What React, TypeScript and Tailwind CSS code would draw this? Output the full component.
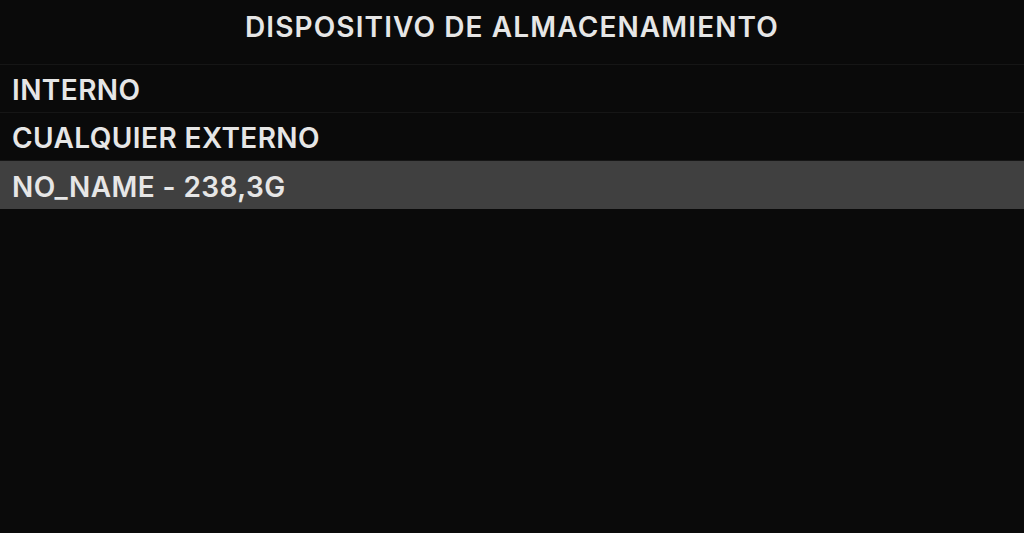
const rows = [
  { label: "INTERNO", selected: false },
  { label: "CUALQUIER EXTERNO", selected: false },
  { label: "NO_NAME - 238,3G", selected: true },
];

export default function App() {
  return (
    <div
      className="flex h-[533px] w-[1024px] flex-col overflow-hidden bg-[#0a0a0a] text-[#e6e6e6]"
      style={{ fontFamily: "Inter, 'Open Sans', sans-serif" }}
    >
      <header className="flex h-[65px] shrink-0 items-start justify-center border-b border-[#161616] pt-[11px]">
        <h1 className="text-[28px] font-semibold leading-[32px] tracking-[0.04em]">DISPOSITIVO DE ALMACENAMIENTO</h1>
      </header>
      <ul className="flex flex-col">
        {rows.map((row) => (
          <li
            key={row.label}
            className={
              row.selected
                ? "flex h-[48px] items-center bg-[#404040] px-[12px] pt-[3px] text-[28px] font-semibold tracking-[0.015em]"
                : "flex h-[48px] items-center border-b border-[#161616] px-[12px] pt-[3px] text-[28px] font-semibold tracking-[0.015em]"
            }
          >
            {row.label}
          </li>
        ))}
      </ul>
    </div>
  );
}
